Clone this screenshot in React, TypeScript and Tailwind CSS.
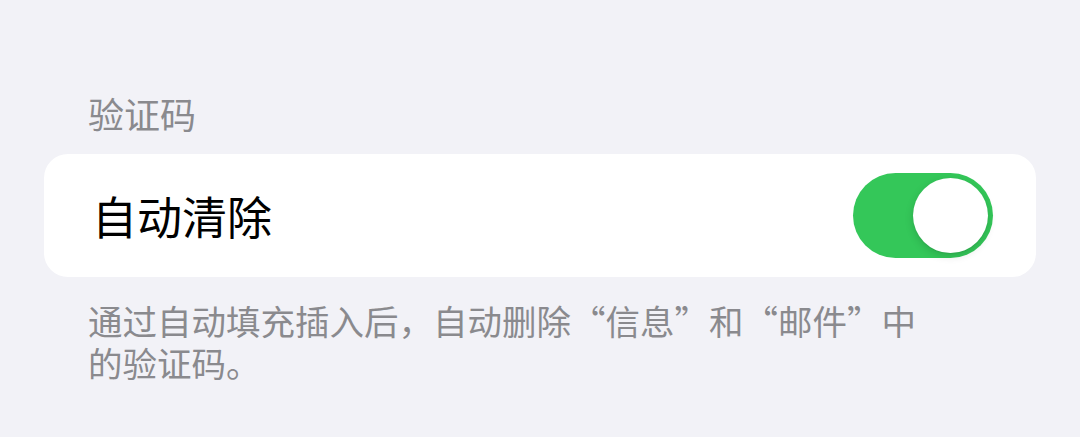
import React, { useState } from 'react';

const Toggle: React.FC<{ on: boolean; onChange: (v: boolean) => void }> = ({ on, onChange }) => (
  <button
    onClick={() => onChange(!on)}
    className={`relative w-[140px] h-[85px] rounded-full transition-colors ${on ? 'bg-[#34c759]' : 'bg-[#e9e9eb]'}`}
  >
    <span
      className={`absolute top-[5px] w-[75px] h-[75px] rounded-full bg-white shadow-[0_3px_8px_rgba(0,0,0,0.15),0_1px_1px_rgba(0,0,0,0.06)] transition-all ${on ? 'left-[60px]' : 'left-[5px]'}`}
    />
  </button>
);

const App: React.FC = () => {
  const [autoClear, setAutoClear] = useState(true);

  return (
    <div
      className="w-full h-[437px] bg-[#f2f2f7] px-[44px] pt-[92px]"
      style={{ fontFamily: '"Noto Sans CJK SC", "Noto Sans", sans-serif' }}
    >
      <h2 className="pl-[44px] text-[36px] leading-[42px] text-[#8a8a8e] font-normal">验证码</h2>

      <div className="mt-[20px] h-[123px] bg-white rounded-[24px] flex items-center justify-between pl-[48px] pr-[43px]">
        <span className="text-[45px] leading-none text-black">自动清除</span>
        <Toggle on={autoClear} onChange={setAutoClear} />
      </div>

      <div className="mt-[22px] pl-[44px] text-[34.5px] leading-[42px] text-[#8a8a8e]">
        <p>通过自动填充插入后，自动删除“信息”和“邮件”中</p>
        <p>的验证码。</p>
      </div>
    </div>
  );
};

export default App;
